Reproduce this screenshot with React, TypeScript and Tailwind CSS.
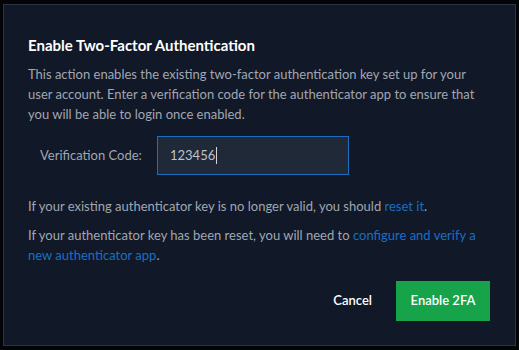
import React from "react";

export default function App() {
  return (
    <div className="w-[519px] h-[350px] bg-[#030405] pt-[4px] pl-[3px]" style={{ fontFamily: "Lato, 'Noto Sans', sans-serif" }}>
      <div className="w-[513px] h-[342px] bg-[#111827] border border-[#2a3446] flex flex-col px-[24px] pt-[30px]">
        <h2 className="text-[15px] font-bold text-white leading-[20px]">Enable Two-Factor Authentication</h2>
        <p className="mt-[9px] text-[13px] leading-[20px] text-[#a0a7b3]">
          This action enables the existing two-factor authentication key set up for your user account. Enter a verification code for the authenticator app to ensure that you will be able to login once enabled.
        </p>
        <div className="mt-[12px] flex items-center">
          <label className="w-[129px] pl-[12px] text-[13px] text-[#a0a7b3]">Verification Code:</label>
          <div className="w-[192px] h-[39px] bg-[#1f2937] border border-[#1b6ec2] px-[12px] flex items-center text-[13px] text-[#bcc2cc]">
            <span>123456</span>
            <span className="w-[1px] h-[17px] bg-[#d1d5db] ml-[1px]" />
          </div>
        </div>
        <p className="mt-[21px] text-[13px] leading-[20px] text-[#a0a7b3]">
          If your existing authenticator key is no longer valid, you should <a className="text-[#1a6fc4]">reset it</a>.
        </p>
        <p className="mt-[9px] text-[13px] leading-[20px] text-[#a0a7b3]">
          If your authenticator key has been reset, you will need to <a className="text-[#1a6fc4]">configure and verify a new authenticator app</a>.
        </p>
        <div className="mt-auto mb-[24px] flex justify-end items-center gap-[24px] pr-[1px]">
          <button className="text-[13px] font-semibold text-white">Cancel</button>
          <button className="w-[94px] h-[40px] bg-[#16a34a] text-[13px] font-semibold text-white">Enable 2FA</button>
        </div>
      </div>
    </div>
  );
}
